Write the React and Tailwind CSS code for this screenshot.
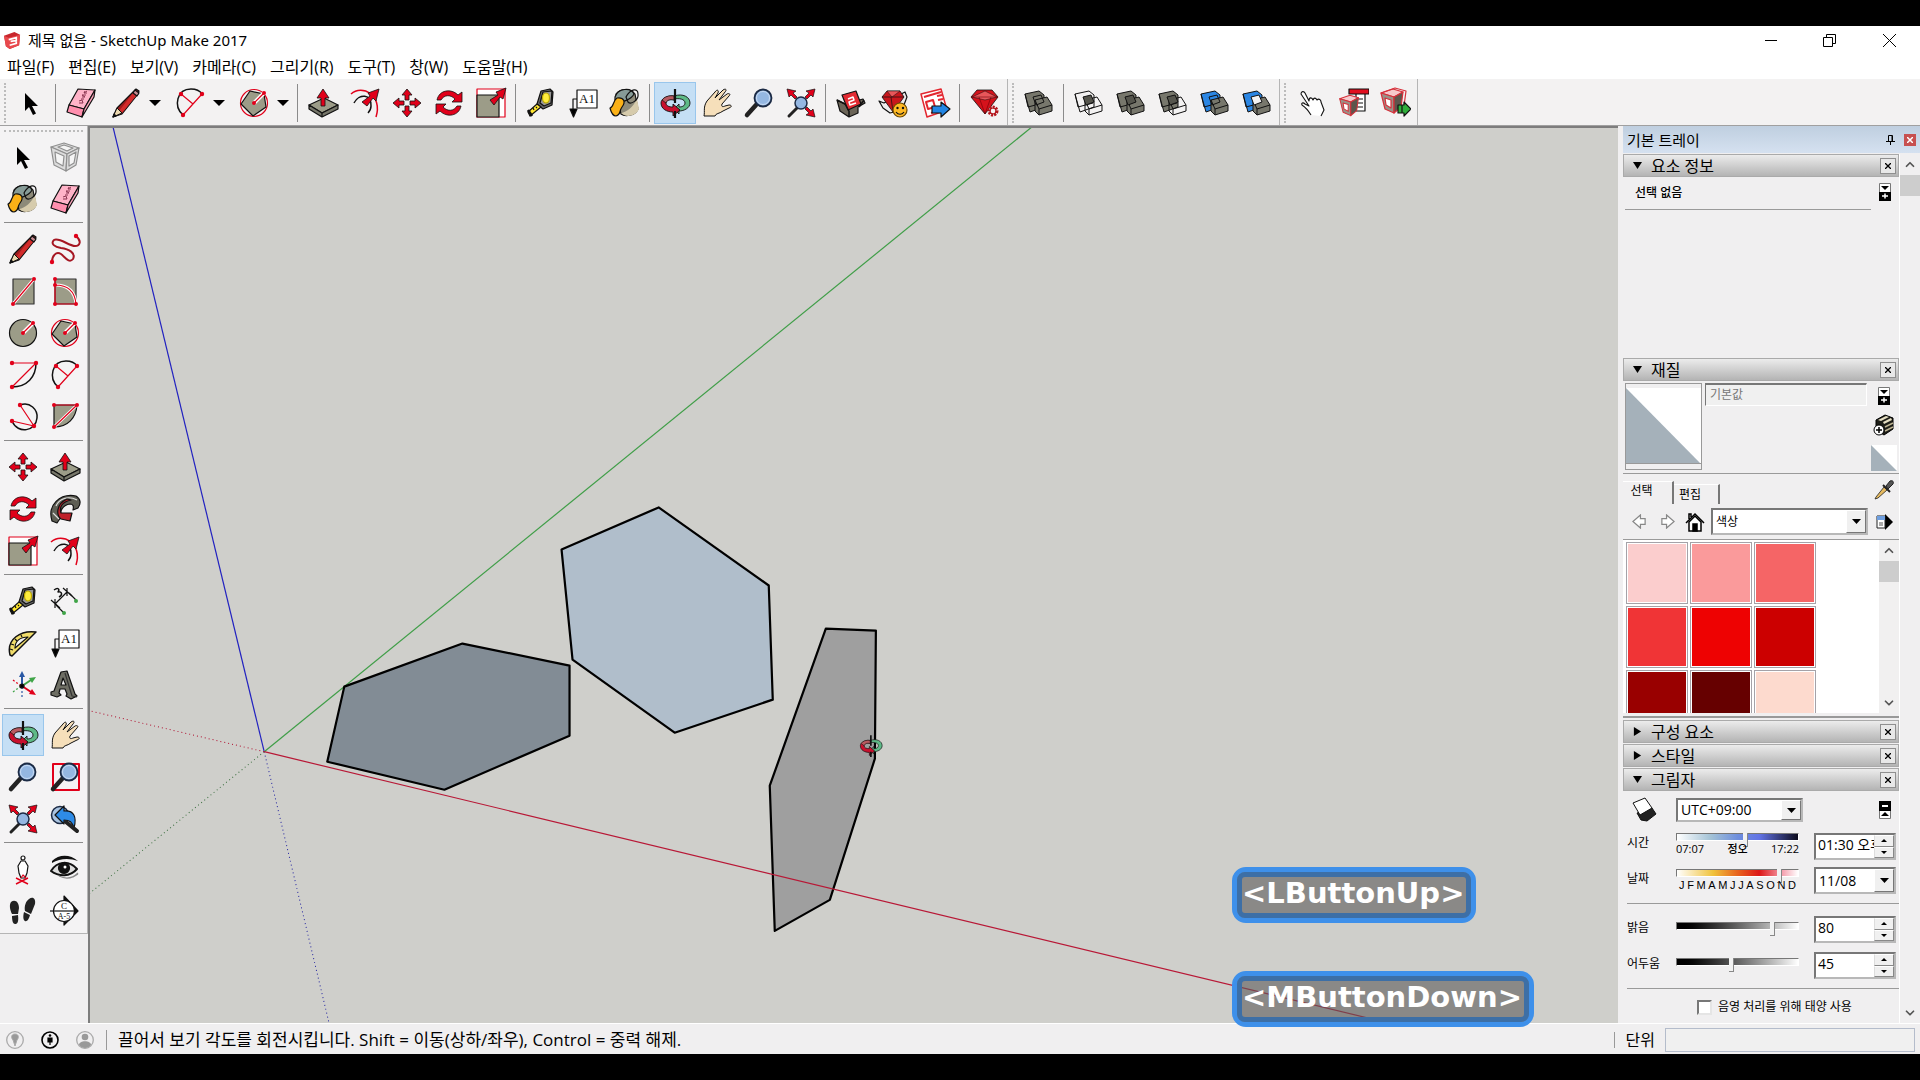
import React from 'react';
import { ChevronUp, ChevronDown } from 'lucide-react';

const RED = '#e1001a';
const STONE = '#9c9c88';

const Svg = ({ children, className = 'w-8 h-8' }) => (
  <svg viewBox="0 0 32 32" className={className} fill="none" stroke="#111" strokeWidth="1.2" strokeLinejoin="round" aria-hidden="true">
    {children}
  </svg>
);

const Dots = ({ points, r = 2 }) => (
  <g fill={RED} stroke="none">
    {points.map(([x, y]) => <circle key={`${x}-${y}`} cx={x} cy={y} r={r} />)}
  </g>
);

/* ---------- drawing tools ---------- */

const SelectIcon = () => (
  <Svg><path d="M10 6v18l4-4 4 8 3-1.5-4-7.5h6z" fill="#000" stroke="none" /></Svg>
);

const EraserIcon = () => (
  <Svg>
    <path d="M13 2 30 3 19 22 4 18z" fill="#ffb3c8" />
    <path d="M4 18 19 22 17 30 2 25z" fill="#ff8fae" />
    <path d="M30 3 29 10 17 30 19 22z" fill="#f9a3ba" />
    <path d="M14 16l4 0-1-3-3 1M16 12l3 0M17 10l3 0-3-2 4 0M19 6l3 0M20 4l-1 2 3-2" stroke="#8a3550" strokeWidth="1" />
  </Svg>
);

const PencilIcon = () => (
  <Svg>
    <path d="M24 4l2-2 3 2-1 3-16 20-9 3 4-9z" fill="#9e1c1c" />
    <path d="M23 6l3 3L12 26l-3-2z" fill="#d22b2b" stroke="none" />
    <path d="M7 21l5 5-9 4z" fill="#ecd9b0" strokeWidth="1" />
    <path d="M3 30l3-1-2-2z" fill="#111" />
    <path d="M25 3l4 3-2 3-4-3z" fill="#c98c93" />
  </Svg>
);

const FreehandIcon = () => (
  <Svg>
    <path d="M27 3C33 8 31 13 26 13 20 13 10 4 5 7 1 11 6 14 12 15 20 16 27 20 24 26 20 31 16 24 12 21 7 18 3 23 3 29" stroke="#a51622" strokeWidth="2" />
    <Dots points={[[27, 3], [3, 29]]} r={2.2} />
  </Svg>
);

const RectIcon = () => (
  <Svg>
    <rect x="6" y="4" width="21" height="25" fill={STONE} stroke="#333" />
    <path d="M6 29 27 4" stroke="#fff" strokeWidth="3" />
    <path d="M6 29 27 4" stroke={RED} />
    <Dots points={[[6, 29], [27, 4]]} />
  </Svg>
);

const RotatedRectIcon = () => (
  <Svg>
    <rect x="6" y="4" width="21" height="25" fill={STONE} stroke="#333" />
    <path d="M6 10c13 0 20 7 21 19" stroke="#fff" strokeWidth="3" />
    <path d="M6 4v25h21M6 10c13 0 20 7 21 19" stroke={RED} />
    <Dots points={[[6, 4], [6, 10], [6, 29], [27, 29]]} />
  </Svg>
);

const CircleIcon = () => (
  <Svg>
    <circle cx="16" cy="16" r="13.5" fill={STONE} />
    <path d="M16 16 26 6" stroke="#fff" strokeWidth="4" />
    <path d="M16 16 26 6" stroke={RED} />
    <Dots points={[[16, 16], [26, 6]]} />
  </Svg>
);

const PolygonIcon = () => (
  <Svg>
    <circle cx="16" cy="16" r="13.5" stroke={RED} />
    <path d="M12 4 26 7 28 20 15 29 3 17z" fill={STONE} />
    <path d="M16 16 26 6" stroke="#fff" strokeWidth="4" />
    <path d="M16 16 26 6" stroke={RED} />
    <Dots points={[[16, 16], [26, 6]]} />
  </Svg>
);

const ArcCenterIcon = () => (
  <Svg>
    <path d="M29 4c0 14-9 24-24 24" strokeWidth="1.5" />
    <path d="M5 4h24L5 28" stroke={RED} />
    <Dots points={[[5, 4], [29, 4], [5, 28]]} r={2.2} />
  </Svg>
);

const ArcIcon = () => (
  <Svg>
    <path d="M9 28C-1 19 3 2 17 2c6 0 9 2 11 5" strokeWidth="1.5" />
    <path d="M9 28 28 7M7 7l12 10" stroke={RED} />
    <Dots points={[[9, 28], [28, 7], [7, 7]]} r={2.2} />
  </Svg>
);

const Arc3Icon = () => (
  <Svg>
    <path d="M13 4c10-4 18 5 17 13-1 13-19 17-25 3" strokeWidth="1.5" />
    <path d="M13 4 27 25 5 20" stroke={RED} />
    <Dots points={[[13, 4], [27, 25], [5, 20]]} r={2.2} />
  </Svg>
);

const PieIcon = () => (
  <Svg>
    <path d="M5 4v22c14 0 22-9 23-22z" fill={STONE} />
    <path d="M5 26 28 4" stroke="#fff" strokeWidth="3" />
    <path d="M5 26 28 4H5" stroke={RED} />
    <Dots points={[[5, 4], [28, 4], [5, 26]]} />
  </Svg>
);

/* ---------- edit tools ---------- */

const PushPullIcon = () => (
  <Svg>
    <path d="M2 18 17 11 31 18 15 26z" fill={STONE} />
    <path d="M2 18v4l13 8 16-8v-4l-16 8z" fill="#77776a" />
    <path d="M15 26v4" />
    <path d="M14 19v-8h-4l6-9 6 9h-4v8z" fill={RED} strokeWidth=".8" />
  </Svg>
);

const OffsetIcon = () => (
  <Svg>
    <path d="M2 7C13-3 34 8 27 30" stroke={RED} strokeWidth="1.5" />
    <path d="M5 16c5-10 18-9 17 3 0 3-1 5-3 7" strokeWidth="1.5" />
    <path d="M13 15l8-6-2-3 11-4-3 12-3-3-6 8z" fill={RED} strokeWidth=".8" />
  </Svg>
);

const MoveIcon = () => (
  <Svg>
    <g fill={RED} strokeWidth=".8">
      <path d="M16 2l5 6h-3v5h-4V8h-3z" />
      <path d="M16 30l5-6h-3v-5h-4v5h-3z" />
      <path d="M2 16l6-5v3h5v4H8v3z" />
      <path d="M30 16l-6-5v3h-5v4h5v3z" />
    </g>
  </Svg>
);

const RotateIcon = () => (
  <Svg>
    <path d="M4 13C6 3 18 1 25 8l4-3v10H19l3-3C17 7 11 8 8 13z" fill={RED} strokeWidth=".8" />
    <path d="M28 19C26 29 14 31 7 24l-4 3V17h10l-3 3c5 5 11 4 14-1z" fill={RED} strokeWidth=".8" />
  </Svg>
);

const ScaleIcon = () => (
  <Svg>
    <path d="M2 2h28v28H2z" stroke={RED} fill="#fff" />
    <rect x="2" y="8" width="22" height="22" fill={STONE} />
    <path d="M15 13l8-5-2-3 10-4-3 11-3-2-6 8z" fill={RED} strokeWidth=".8" />
  </Svg>
);

const FollowMeIcon = () => (
  <Svg>
    <path d="M3 28C-2 12 11 0 27 3c5 3 5 8 2 12l-5 2c1-4 0-6-3-6-7 1-11 7-9 13l-4 6z" fill="#5e5e54" />
    <path d="M7 13C10 6 19 2 28 7M4 20l6 6" stroke="#ddd" />
    <path d="M22 7c-9 2-12 7-10 13h11l-2 8-9-2C7 22 7 11 18 6z" fill="#c0202a" />
  </Svg>
);

const TapeIcon = () => (
  <Svg>
    <path d="M12 17 16 4l9-2 3 3-1 13-9 4z" fill="#666" />
    <path d="M15 16 18 5l9-1-1 12-7 3z" fill="#999" />
    <ellipse cx="21" cy="11" rx="3.5" ry="5" fill="#ffed3d" stroke="#bda800" />
    <path d="M12 17l4 3-11 9-2-4z" fill="#ffe62e" />
    <path d="M3 23l4 6" strokeWidth="2.5" />
    <path d="M8 21l1 2M11 20l1 1" />
  </Svg>
);

const DimensionIcon = () => (
  <Svg>
    <path d="M6 19 18 7M2 15l9 8M14 3l9 8M6 14v9M18 3v8" />
    <path d="M7 20l7 7M20 8l7 7" />
    <path d="M5 5c4-3 6-1 4 2 4-1 5 3 1 5" strokeWidth="1.5" />
    <g fill="#3fa447" stroke="none"><circle cx="15" cy="28" r="2" /><circle cx="27" cy="16" r="2" /></g>
  </Svg>
);

const ProtractorIcon = () => (
  <Svg>
    <path d="M3 28C-1 12 14 3 29 5L5 29z" fill="#f1dd6b" strokeWidth="1.5" />
    <path d="M8 21c0-7 5-11 13-11z" fill="#f4f4f4" />
    <path d="M3 22l3 1M4 17l3 1M8 12l2 2M14 8l1 2" />
  </Svg>
);

const TextIcon = () => (
  <Svg>
    <rect x="10" y="3" width="20" height="18" fill="#fff" />
    <text x="20" y="16" textAnchor="middle" fontFamily="Liberation Serif" fontSize="13" fill="#111" stroke="none">A1</text>
    <path d="M10 12H6v11" />
    <path d="M3 22h7l-3.500 8z" fill="#000" />
  </Svg>
);

const AxesIcon = () => (
  <Svg>
    <path d="M15 17V6" stroke="#2b59a5" strokeWidth="2" />
    <path d="M12 8l3-6 3 6z" fill="#2b59a5" stroke="none" />
    <path d="M15 17l9-6" stroke="#3fa447" strokeWidth="2" />
    <path d="M22 9l7-1-4 6z" fill="#3fa447" stroke="none" />
    <path d="M15 17l9 6" stroke={RED} strokeWidth="2" />
    <path d="M25 20l4 6-7-1z" fill={RED} stroke="none" />
    <path d="M15 18v10" stroke="#2b59a5" strokeDasharray="2 2" />
    <path d="M14 17l-8 6" stroke="#3fa447" strokeDasharray="2 2" />
    <path d="M14 17l-8-6" stroke={RED} strokeDasharray="2 2" />
    <circle cx="15" cy="17" r="2" fill="#000" />
  </Svg>
);

const Text3DIcon = () => (
  <Svg>
    <path d="M12 3l6-1 8 23 2 2-6 3-5-3 1-2-2-5h-5l-1 4 2 2-4 2-6-2v-3l3-1z" fill="#6e6e64" />
    <path d="M12 16l2-7 3 7z" fill="#f4f4f4" />
    <path d="M16 4l7 23 5 1" stroke="#333" />
  </Svg>
);

const PaintIcon = () => (
  <Svg>
    <path d="M7 7c4-6 15-6 19 0l3 15c-3 7-13 8-17 5z" fill="#8d8a79" />
    <path d="M12 26c6-1 12-6 16-14l2 10c-3 7-11 8-15 6z" fill="#d6cbac" stroke="none" />
    <path d="M6 10c3-9 16-10 19-3-3 6-13 9-19 8z" fill="#869b97" />
    <path d="M17 10c5-9 12-9 12-3 1 6-7 11-10 8z" />
    <path d="M8 11c7-1 9 4 5 9-3 4-1 8-6 9-3 0-5-4-6-8 4-1 3-8 7-10z" fill="#fbb117" />
  </Svg>
);

const ComponentIcon = () => (
  <Svg>
    <g stroke="#8f8f8f" fill="#dcdcdc">
      <path d="M2 6 15 2l15 5-12 6z" />
      <path d="M2 6 18 13l-1 17L5 24z" />
      <path d="M18 13 30 7l-3 17-10 6z" />
      <path d="M6 11l9 4-1 10-7-4zM20 15l7-4-2 11-5 3zM9 6l6-2 9 3-6 3z" fill="#f5f5f5" />
    </g>
  </Svg>
);

/* ---------- camera tools ---------- */

const OrbitShape = () => (
  <>
    <path d="M15 9c9-3 16 1 16 7 0 5-6 8-11 8v3l-5-5 5-5v3c3 0 6-1 6-4 0-4-6-5-11-4z" fill="#5eba87" strokeWidth=".9" />
    <path d="M15 9C8 8 2 12 2 16c0 6 6 9 12 9v4l7-6-7-6v3c-4 0-7-1-7-4s4-4 8-3z" fill="#c8102e" strokeWidth=".9" />
    <path d="M3 13c2-3 7-5 12-4v4c-4-1-7 0-8 3z" fill="#b95a61" strokeWidth=".7" />
    <path d="M16 2v14M16 24v7" stroke="#111" strokeWidth="2.2" />
  </>
);

const OrbitIcon = () => <Svg><OrbitShape /></Svg>;

const PanIcon = () => (
  <Svg>
    <path d="M3 29c1-5-1-9 3-15l8-9c2-3 4-2 3 1l-3 5 8-8c3-2 4 0 2 2l-6 8 8-6c2-1 4 0 2 2l-7 8c-1 3 1 3 3 2l4-1c3 0 3 2 0 3l-6 3c-4 3-7 2-8 5z" fill="#f6dfba" strokeWidth="1" />
  </Svg>
);

const Glass = () => (
  <>
    <path d="M4 28 13 18" stroke="#222" strokeWidth="4.500" strokeLinecap="round" />
    <circle cx="20" cy="11" r="8.5" fill="#94b7e2" stroke="#1b2a44" strokeWidth="1.800" />
    <circle cx="20" cy="11" r="6.500" stroke="#c9dcf4" strokeWidth="1" />
  </>
);

const ZoomIcon = () => <Svg><Glass /></Svg>;

const ZoomWindowIcon = () => (
  <Svg>
    <rect x="4" y="3" width="26" height="26" stroke={RED} strokeWidth="2" />
    <Glass />
  </Svg>
);

const ZoomExtentsIcon = () => (
  <Svg>
    <path d="M4 29l8-8" stroke="#222" strokeWidth="3" strokeLinecap="round" />
    <circle cx="16" cy="16" r="6" fill="#94b7e2" stroke="#1b2a44" strokeWidth="1.5" />
    <g fill={RED} strokeWidth=".7">
      <path d="M2 2l9 2-3 2 4 4-2 2-4-4-2 2z" />
      <path d="M30 2l-9 2 3 2-4 4 2 2 4-4 2 2z" />
      <path d="M30 30l-9-2 3-2-4-4 2-2 4 4 2-2z" />
    </g>
  </Svg>
);

const PreviousIcon = () => (
  <Svg>
    <circle cx="11" cy="12" r="8.5" fill="#a9c3e0" stroke="#1b2a44" strokeWidth="1.5" />
    <path d="M6 12l9-9v5c10-1 13 6 10 17-2-6-4-8-10-8v4z" fill="#2e8be6" />
    <path d="M17 19 28 28" stroke="#222" strokeWidth="4" strokeLinecap="round" />
  </Svg>
);

const PositionCameraIcon = () => (
  <Svg>
    <path d="M9 25l12 6M21 25 9 31" stroke={RED} strokeWidth="1.5" />
    <circle cx="16" cy="5" r="2" fill="#fff" />
    <path d="M14 8h4l3 5-1 7-2 5h-4l-2-5-1-7z" fill="#fff" />
    <path d="M14 25l2-3 3 3" stroke={RED} />
  </Svg>
);

const LookIcon = () => (
  <Svg>
    <path d="M3 8C10 1 21 1 29 8 21 5 11 5 3 10z" fill="#111" stroke="none" />
    <path d="M2 18c6-10 18-11 26-2-7 8-18 8-26 2z" fill="#ddd" strokeWidth="2" />
    <circle cx="15" cy="15" r="5.5" fill="#111" />
    <circle cx="16" cy="14" r="1.5" fill="#fff" stroke="none" />
    <path d="M10 23c8 4 14 2 19-3M24 24l5-3" stroke="#888" />
  </Svg>
);

const WalkIcon = () => (
  <Svg>
    <g fill="#222" stroke="none">
      <path d="M4 7c4-3 8 0 8 6l-1 6H5C3 15 2 10 4 7zM5 21l6-1c1 8-1 9-3 9s-3-3-3-8z" />
      <path d="M22 4c4-3 7 0 6 5l-4 10-6-3c-1-5 1-10 4-12zM17 17l6 3c-1 4-3 7-5 6s-2-5-1-9z" />
    </g>
  </Svg>
);

const SectionIcon = () => (
  <Svg>
    <path d="M15 5V1l14 15-14 14v-4z" fill="#111" />
    <circle cx="15" cy="16" r="10.5" fill="#fff" />
    <path d="M1 16h28" />
    <text x="15" y="14" textAnchor="middle" fontFamily="Liberation Serif" fontSize="9" fill="#111" stroke="none">C</text>
    <text x="15" y="24" textAnchor="middle" fontFamily="Liberation Serif" fontSize="8" fill="#111" stroke="none">A-5</text>
  </Svg>
);

/* ---------- warehouse ---------- */

const WarehouseIcon = () => (
  <Svg>
    <path d="M2 13l8 4 18-5 2 4-7 4v6l-9 4-9-6z" fill="#6b6558" />
    <path d="M7 8 21 4l5 13-13 6z" fill="#e32b33" />
    <path d="M13 12l5-2 1 3-5 2 1 3 6-2" stroke="#fff" strokeWidth="1.5" />
    <path d="M2 13l8 4 4 7M29 13l-5 7M14 24v6" strokeWidth="1.5" />
  </Svg>
);

const ExtensionWarehouseIcon = () => (
  <Svg>
    <path d="M2 14l5 2 21-11 2 5-5 13-12 3-7-5z" fill="#eee" />
    <path d="M5 10l5-6h13l4 6-11 15z" fill="#c9161c" strokeWidth=".8" />
    <path d="M10 4l5 6 8-6z" fill="#e8565a" strokeWidth=".5" />
    <path d="M5 10h22M14 10l2 15" strokeWidth=".7" />
    <circle cx="23" cy="23" r="7" fill="#ffba24" stroke="#6d4a00" />
    <circle cx="20.500" cy="21" r="1.200" fill="#111" stroke="none" />
    <circle cx="26" cy="21" r="1.200" fill="#111" stroke="none" />
    <path d="M19 25c2 3 6 3 8 0" />
  </Svg>
);

const LayoutIcon = () => (
  <Svg>
    <path d="M2 7 22 2l6 21-20 7z" fill="#fff" stroke="#e3262f" strokeWidth="1.5" />
    <path d="M5 10l17-5M7 15l7-2 2 7-7 2zM18 9l5-1M19 13l5-1M12 26l8-2" stroke="#e3262f" strokeWidth="2" />
    <path d="M13 19h9v-4l9 7-9 8v-4h-9z" fill="#2286e4" />
  </Svg>
);

const RubyIcon = () => (
  <Svg>
    <path d="M2 10l6-7h15l6 7-13 17z" fill="#d5121b" strokeWidth=".8" />
    <path d="M3 10l13-6 12 6-12 3z" fill="#e8565a" strokeWidth=".5" />
    <path d="M2 10h27M10 10l6 17 6-17" strokeWidth=".6" stroke="#6d0007" />
    <circle cx="24" cy="24" r="4" fill="#f4f4f4" stroke="#b3141b" strokeWidth="3" strokeDasharray="2 1" />
    <circle cx="24" cy="24" r="3" stroke="#b3141b" />
  </Svg>
);

/* ---------- solid tools ---------- */

const SOLID = '#77776c';
const BLUE = '#2b86e3';

const Solids = ({ back = SOLID, front = SOLID, overlap = 'none' }) => (
  <Svg>
    <g strokeWidth="1">
      <path d="M2 7 16 4l5 4v12L7 25z" fill={back} />
      <path d="M5 20l15-4M2 7l3 13" />
      <path d="M12 13l12-3 5 8v6l-13 4-4-4z" fill={front} />
      <path d="M12 13l4 9 13-4M16 22v6" />
      <path d="M10 10l8-2 3 7-8 3z" fill={overlap} />
    </g>
  </Svg>
);

const HandIcon = () => (
  <Svg>
    <path d="M16 28c-3-5-6-8-9-10-1-2 1-3 3-1l4 2L6 7c0-3 3-3 4-1l4 8c0-4 3-4 4-1 1-3 3-2 4 0 2-2 4 0 4 2l3 8-3 6" fill="#fff" strokeWidth="1.100" />
  </Svg>
);

const RedBox = () => (
  <g stroke="#d6303a">
    <path d="M2 9 14 5l10 3-9 5z" fill="#f6c9cc" />
    <path d="M2 9l13 4 0 16-9-4z" fill="#9b9187" />
    <path d="M15 13l9-5-2 15-7 6z" fill="#5d554c" />
    <path d="M6 14l6 2v8l-5-3z" fill="#fff" />
  </g>
);

const DynamicMenuIcon = () => (
  <Svg>
    <rect x="19" y="6" width="9" height="18" fill="#fff" />
    <path d="M20 12h6M20 16h6M20 20h6" />
    <rect x="12" y="2" width="20" height="5" fill="#e10f1f" />
    <g transform="translate(1 4) scale(.85)"><RedBox /></g>
  </Svg>
);

const DynamicOptionsIcon = () => (
  <Svg>
    <g transform="translate(0 -3)"><RedBox /></g>
    <path d="M2 6 16 1l11 3-2 15" stroke="#d6303a" />
    <path d="M19 18h6v-3l7 7-7 7v-3h-6z" fill="#2fae3b" />
    <path d="M23 18v8" />
  </Svg>
);

/* ---------- shared bits ---------- */

const ToolButton = ({ label, active, menu, children }) => (
  <button
    aria-label={label}
    className={`w-[42px] h-[42px] shrink-0 flex items-center justify-center ${menu ? 'pl-[5px]' : ''} ${active ? 'bg-[#c5dff5] border border-[#99c6ec]' : ''}`}
  >
    {children}
  </button>
);

const Caret = ({ label }) => (
  <button aria-label={label} className="w-[22px] h-[42px] shrink-0 flex items-center justify-center">
    <svg viewBox="0 0 12 6" className="w-3 h-1.5" aria-hidden="true"><path d="M0 0h12L6 6z" /></svg>
  </button>
);

const Divider = () => <div className="w-px h-[38px] bg-[#8b8b8b] ml-[3px] mr-1 shrink-0"></div>;
const Grip = () => <div className="h-10 border-l-2 border-dotted border-[#bcbcbc] ml-1 mr-1 shrink-0"></div>;
const ToolGroup = ({ children }) => (
  <div className="h-[46px] pt-px flex items-center border-r border-[#b5b5b5] pr-px">{children}</div>
);

const mainTools = [
  ['선택', SelectIcon], '|',
  ['지우개', EraserIcon], ['선', PencilIcon, true], ['호', ArcIcon, true], ['다각형', PolygonIcon, true], '|',
  ['밀기/끌기', PushPullIcon], ['오프셋', OffsetIcon], ['이동', MoveIcon], ['회전', RotateIcon], ['배율', ScaleIcon], '|',
  ['줄자', TapeIcon], ['텍스트', TextIcon], ['페인트 통', PaintIcon], '|',
  ['궤도', OrbitIcon], ['이동 보기', PanIcon], ['확대/축소', ZoomIcon], ['범위 확대/축소', ZoomExtentsIcon], '|',
  ['3D Warehouse', WarehouseIcon], ['Extension Warehouse', ExtensionWarehouseIcon], ['LayOut', LayoutIcon], '|',
  ['확장 관리자', RubyIcon],
];

const sideTools = [
  [['선택', SelectIcon], ['구성 요소', ComponentIcon], ['페인트 통', PaintIcon], ['지우개', EraserIcon]],
  [
    ['선', PencilIcon], ['자유형', FreehandIcon], ['직사각형', RectIcon], ['회전된 직사각형', RotatedRectIcon],
    ['원', CircleIcon], ['다각형', PolygonIcon], ['호', ArcCenterIcon], ['2점 호', ArcIcon], ['3점 호', Arc3Icon], ['파이', PieIcon],
  ],
  [
    ['이동', MoveIcon], ['밀기/끌기', PushPullIcon], ['회전', RotateIcon], ['따라가기', FollowMeIcon],
    ['배율', ScaleIcon], ['오프셋', OffsetIcon],
  ],
  [
    ['줄자', TapeIcon], ['치수', DimensionIcon], ['각도기', ProtractorIcon], ['텍스트', TextIcon],
    ['축', AxesIcon], ['3D 텍스트', Text3DIcon],
  ],
  [
    ['궤도', OrbitIcon], ['이동 보기', PanIcon], ['확대/축소', ZoomIcon], ['창 확대/축소', ZoomWindowIcon],
    ['범위 확대/축소', ZoomExtentsIcon], ['이전', PreviousIcon],
  ],
  [['카메라 배치', PositionCameraIcon], ['둘러보기', LookIcon], ['걷기', WalkIcon], ['단면', SectionIcon]],
];

const TitleBar = () => (
  <header className="h-7 flex items-center bg-white pl-1">
    <svg viewBox="0 0 18 20" className="w-[17px] h-[19px]" aria-hidden="true">
      <path d="M0 5 11 1l6 3-1 11-10 4-4-3z" fill="#c8262c" />
      <path d="M0 5l5 2 12-3-1 11-10 4-4-3z" fill="#e8484c" />
      <path d="M5 9l8-2v3l-6 1M6 15l7-2v-3" stroke="#fff" strokeWidth="1.800" fill="none" />
    </svg>
    <h1 className="ml-[7px] text-[15px] leading-5 font-['Noto_Sans','Noto_Sans_CJK_KR',sans-serif]">제목 없음 - SketchUp Make 2017</h1>
    <div className="ml-auto flex">
      <button aria-label="최소화" className="w-[58px] h-7 flex items-center justify-center">
        <svg viewBox="0 0 12 12" className="w-3 h-3" stroke="#000" aria-hidden="true"><path d="M0 6.500h12" /></svg>
      </button>
      <button aria-label="이전 크기로 복원" className="w-[58px] h-7 flex items-center justify-center">
        <svg viewBox="0 0 13 13" className="w-[13px] h-[13px]" stroke="#000" fill="none" aria-hidden="true">
          <path d="M.5 3.500h9v9h-9zM3.500 3V.500h9v9H10" />
        </svg>
      </button>
      <button aria-label="닫기" className="w-[62px] h-7 flex items-center justify-center">
        <svg viewBox="0 0 13 13" className="w-[13px] h-[13px]" stroke="#000" aria-hidden="true"><path d="M0 0l13 13M13 0 0 13" /></svg>
      </button>
    </div>
  </header>
);

const menus = ['파일(F)', '편집(E)', '보기(V)', '카메라(C)', '그리기(R)', '도구(T)', '창(W)', '도움말(H)'];

const MenuBar = () => (
  <nav className="h-[25px] flex items-center gap-[14px] bg-white pl-[7px] text-[16px] leading-5">
    {menus.map((m) => <button key={m}>{m}</button>)}
  </nav>
);

const Toolbar = () => (
  <div className="h-[47px] flex items-start bg-[#f3f2f2] border-b border-[#a0a0a0] shrink-0">
    <ToolGroup>
      <Grip />
      {mainTools.map((tool, i) => {
        if (tool === '|') return <Divider key={i} />;
        const [label, Icon, menu] = tool;
        return (
          <React.Fragment key={i}>
            <ToolButton label={label} active={label === '궤도'} menu={menu}><Icon /></ToolButton>
            {menu && <Caret label={`${label} 메뉴`} />}
          </React.Fragment>
        );
      })}
    </ToolGroup>
    <ToolGroup>
      <Grip />
      <ToolButton label="외부 셸"><Solids /></ToolButton>
      <Divider />
      <ToolButton label="교차"><Solids back="none" front="none" overlap="#55554d" /></ToolButton>
      <ToolButton label="통합"><Solids overlap="#55554d" /></ToolButton>
      <ToolButton label="빼기"><Solids front="none" overlap="#55554d" /></ToolButton>
      <ToolButton label="자르기"><Solids back={BLUE} /></ToolButton>
      <ToolButton label="분할"><Solids back={BLUE} overlap="#f3f2f2" /></ToolButton>
    </ToolGroup>
    <ToolGroup>
      <Grip />
      <ToolButton label="상호 작용"><HandIcon /></ToolButton>
      <ToolButton label="구성 요소 옵션"><DynamicMenuIcon /></ToolButton>
      <ToolButton label="구성 요소 속성"><DynamicOptionsIcon /></ToolButton>
    </ToolGroup>
  </div>
);

const SideTools = () => (
  <aside className="w-[88px] shrink-0 bg-[#f0eff0]">
    <div className="bg-[#f4f3f4] border-b border-r border-[#b5b5b5] pt-1 pb-px">
      <div className="mx-1 h-[6px] border-t-2 border-dotted border-[#bcbcbc]"></div>
      {sideTools.map((group, i) => (
        <div key={i}>
          {i > 0 && <div className="h-px bg-[#8b8b8b] mx-1 mt-[2px] mb-[5px]"></div>}
          <div className="grid grid-cols-[42px_42px] pl-[2px]">
            {group.map(([label, Icon]) => (
              <ToolButton key={label} label={label} active={label === '궤도'}><Icon /></ToolButton>
            ))}
          </div>
        </div>
      ))}
    </div>
  </aside>
);

const KeyBadge = ({ children }) => (
  <div className="h-14 w-fit rounded-[14px] border-[5px] border-[#3e90ea] bg-[#5c5a5a]/60">
    <div className="h-full rounded-lg border-[5px] border-[#3d6fa6] pr-[2px] pb-1 flex items-center text-white font-bold text-[29px] leading-9 font-['DejaVu_Sans',sans-serif]">
      {children}
    </div>
  </div>
);

const Viewport = () => (
  <main className="relative flex-1 min-w-0 border-l-2 border-t-2 border-[#7d7d7d] bg-[#cfcfcb]">
    <svg viewBox="91 129 1528 894" preserveAspectRatio="xMinYMin slice" className="absolute inset-0 w-full h-full" fill="none" role="img" aria-label="모델 보기">
      <path d="M265 752 114 128" stroke="#2222c0" strokeWidth="1.200" />
      <path d="M265 752 330 1024" stroke="#2222a0" strokeDasharray="1 3" />
      <path d="M265 752 1033 127" stroke="#3f9e47" strokeWidth="1.200" />
      <path d="M265 752 90 894" stroke="#3a6e3e" strokeDasharray="1 3" />
      <path d="M265 752 90 711" stroke="#b01030" strokeDasharray="1 3" />
      <g stroke="#000" strokeWidth="2.200" strokeLinejoin="round">
        <path d="M345 687 463 644 570 666 570 736 445 790 328 762z" fill="#828c95" />
        <path d="M562 550 659 508 769 586 773 700 675 733 573 660z" fill="#b0becb" />
        <path d="M826 629 876 631 875 759 830 900 775 931 770 786z" fill="#9f9f9f" />
      </g>
      <path d="M265 752 1384 1022" stroke="#b81836" strokeWidth="1.200" />
      <g transform="translate(859 734) scale(.75)" stroke="#111"><OrbitShape /></g>
    </svg>
    <div className="absolute z-10 left-[1142px] -bottom-[4px] flex flex-col gap-12">
      <KeyBadge>&lt;LButtonUp&gt;</KeyBadge>
      <KeyBadge>&lt;MButtonDown&gt;</KeyBadge>
    </div>
  </main>
);

/* ---------- tray ---------- */

const SectionHeader = ({ title, open }) => (
  <div className="h-[23px] flex items-center bg-linear-to-b from-[#ececec] to-[#b4b4b4] border border-[#aaa] pl-[9px] pr-[2px]">
    <svg viewBox="0 0 10 10" className="w-[9px] h-[9px]" aria-hidden="true">
      <path d={open ? 'M0 1h10L5 9z' : 'M1 0v10l8-5z'} />
    </svg>
    <h2 className="ml-[9px] text-[16px] leading-5">{title}</h2>
    <button aria-label={`${title} 닫기`} className="ml-auto w-4 h-4 border border-[#8f8f8f] bg-[#e8e8e8] flex items-center justify-center">
      <svg viewBox="0 0 6 6" className="w-1.5 h-1.5" stroke="#000" strokeWidth="1.300" aria-hidden="true"><path d="M0 0l6 6M6 0 0 6" /></svg>
    </button>
  </div>
);

const DetailToggle = ({ flip }) => (
  <button aria-label="세부 정보" className="w-3 h-[18px]">
    <svg viewBox="0 0 12 18" className="w-3 h-[18px]" aria-hidden="true">
      <path d="M.5.500h11v17H.5z" fill="#fff" stroke="#777" />
      {flip ? (
        <>
          <path d="M0 0h12v10H0z" />
          <path d="M3 4h6v2H3z" fill="#fff" />
          <path d="M6 11l4 4H2z" />
        </>
      ) : (
        <>
          <path d="M2 3h8L6 7z" />
          <path d="M0 9h12v9H0z" />
          <path d="M3 13h6M6 10.500v5" stroke="#fff" strokeWidth="1.5" />
        </>
      )}
    </svg>
  </button>
);

const field = 'bg-white border-2 border-t-[#777] border-l-[#777] border-b-[#b8b8b8] border-r-[#b8b8b8]';

const SelectBox = ({ label, value, className }) => (
  <div className={`relative ${field} ${className}`}>
    <select aria-label={label} defaultValue={value} className="appearance-none w-full h-full bg-transparent pl-[3px] outline-none">
      <option>{value}</option>
    </select>
    <span className="absolute right-0 top-0 h-full w-5 bg-[#f0f0f0] border border-t-white border-l-white border-b-[#777] border-r-[#777] flex items-center justify-center pointer-events-none">
      <svg viewBox="0 0 9 5" className="w-[9px] h-[5px]" aria-hidden="true"><path d="M0 0h9L4.500 5z" /></svg>
    </span>
  </div>
);

const Spinner = ({ label, value }) => (
  <div className={`w-[82px] h-[27px] flex ${field}`}>
    <input aria-label={label} defaultValue={value} className="w-0 flex-1 min-w-0 pl-[2px] pb-1 text-[14px] leading-4 bg-transparent outline-none" />
    <div className="w-5 flex flex-col">
      {['M0 3h6L3 0z', 'M0 0h6L3 3z'].map((d, i) => (
        <button key={d} aria-label={i ? '감소' : '증가'} className="flex-1 min-h-0 bg-[#f0f0f0] border border-t-white border-l-[#ddd] border-b-[#888] border-r-[#888] flex items-center justify-center">
          <svg viewBox="0 0 6 3" className="w-1.5 h-[3px]" aria-hidden="true"><path d={d} /></svg>
        </button>
      ))}
    </div>
  </div>
);

const Slider = ({ id, value, gradient }) => (
  <input
    id={id}
    type="range"
    defaultValue={value}
    className={`block appearance-none w-full h-2 border border-t-[#777] border-l-[#777] border-b-white border-r-white ${gradient} [&::-webkit-slider-thumb]:appearance-none [&::-webkit-slider-thumb]:w-[5px] [&::-webkit-slider-thumb]:h-[14px] [&::-webkit-slider-thumb]:mt-[5px] [&::-webkit-slider-thumb]:bg-[#f2f2f2] [&::-webkit-slider-thumb]:border-r [&::-webkit-slider-thumb]:border-b [&::-webkit-slider-thumb]:border-[#888]`}
  />
);

const EntityInfo = () => (
  <section className="h-[204px]">
    <SectionHeader title="요소 정보" open />
    <div className="flex items-start justify-between pl-3 pr-2 pt-1.5">
      <p className="text-[12px] leading-5 font-medium">선택 없음</p>
      <DetailToggle />
    </div>
    <div className="h-px bg-[#9a9a9a] ml-[2px] mr-7 mt-[6px]"></div>
  </section>
);

const swatches = [
  ['#fccdcd', 'bg-[#fbcdcd]'], ['#fb9a9b', 'bg-[#fa9a9b]'], ['#f56566', 'bg-[#f56566]'],
  ['#f03436', 'bg-[#f03436]'], ['#ee0202', 'bg-[#ee0202]'], ['#cc0000', 'bg-[#cc0000]'],
  ['#990000', 'bg-[#990000]'], ['#660000', 'bg-[#660000]'], ['#fddace', 'bg-[#fddace]'],
];

const Materials = () => (
  <section>
    <SectionHeader title="재질" open />
    <div className="h-[93px] flex pl-[2px] pt-[2px] border-b border-[#9a9a9a]">
      <div className="w-[77px] h-[87px] border border-[#999] pt-1 pb-[5px]">
        <svg viewBox="0 0 75 75" className="w-[75px] h-[76px]" preserveAspectRatio="none" aria-hidden="true">
          <path d="M0 0h75v75H0z" fill="#fff" />
          <path d="M0 0v75h75z" fill="#a5b1ba" />
          <path d="M0 75h75" stroke="#999" strokeWidth="2" />
        </svg>
      </div>
      <input aria-label="재질 이름" defaultValue="기본값" className="border border-t-2 border-t-[#777] border-l-[#777] border-b-white border-r-white ml-[3px] w-[162px] h-[23px] pl-1 pb-[2px] text-[12px] text-[#777] bg-[#f0f0f0] outline-none" />
      <div className="ml-auto w-[27px] flex flex-col items-center pt-1 gap-2 mr-[2px]">
        <DetailToggle />
        <button aria-label="재질 만들기">
          <svg viewBox="0 0 22 24" className="block w-[22px] h-6" stroke="#000" aria-hidden="true">
            <path d="M3 7 12 2l8 3v11l-9 6-8-5z" fill="#1d1d17" />
            <path d="M5 7l8-4 3 1-8 4zM10 9l8-4 1 2-8 4z" fill="#e6dfc3" stroke="none" />
            <path d="M12 14l8-4M12 18l8-4" stroke="#bbb292" strokeWidth="1.5" />
            <circle cx="6" cy="17" r="5" fill="#fff" />
            <path d="M3 17h6M6 14v6" strokeWidth="1.5" />
          </svg>
        </button>
        <button aria-label="기본 재질로 설정">
          <svg viewBox="0 0 26 26" className="block w-[26px] h-[26px]" aria-hidden="true">
            <path d="M0 0h26v26H0z" fill="#fff" />
            <path d="M0 0v26h26z" fill="#a5b1ba" />
          </svg>
        </button>
      </div>
    </div>
    <div className="h-[30px] flex items-end text-[12px] leading-4" role="tablist">
      <button role="tab" aria-selected="true" className="w-[51px] h-[23px] pr-3 pb-1 border-t border-t-white border-r-2 border-r-[#777]">선택</button>
      <button role="tab" aria-selected="false" className="w-[46px] h-[20px] pr-3 border-t border-t-white border-r-2 border-r-[#777]">편집</button>
      <button aria-label="스포이트" className="ml-auto mr-[5px] mb-1">
        <svg viewBox="0 0 20 20" className="w-5 h-5" stroke="#222" aria-hidden="true">
          <path d="M10 7 2 17l-1 2 3-1 9-8z" fill="#e5b95e" strokeWidth=".8" />
          <path d="M9 5l7 7" strokeWidth="2" />
          <path d="M12 6l4-5c3-1 4 1 3 3l-5 5z" fill="#555" />
        </svg>
      </button>
    </div>
    <div className="h-[36px] flex items-center border-b border-[#9a9a9a]">
      {['M9 5V1L1 8l8 7v-4h5V5z', 'M7 5V1l8 7-8 7v-4H2V5z'].map((d, i) => (
        <button key={d} aria-label={i ? '앞으로' : '뒤로'} className="ml-[9px] mr-1">
          <svg viewBox="0 0 16 16" className="w-[15px] h-[15px]" fill="#fff" stroke="#888" strokeWidth="1.300" aria-hidden="true"><path d={d} /></svg>
        </button>
      ))}
      <button aria-label="모델 안" className="ml-1.5">
        <svg viewBox="0 0 20 20" className="w-5 h-5" stroke="#000" strokeWidth="1.5" aria-hidden="true">
          <path d="M4 10v9h12v-9l-6-6z" fill="#fff" />
          <path d="M1 11l9-9 9 9M4 7V2h2v3" fill="none" />
          <path d="M8 12h4v7H8z" />
        </svg>
      </button>
      <SelectBox label="재질 모음" value="색상" className="ml-1.5 w-[157px] h-[27px] text-[12px]" />
      <button aria-label="자세히" className="ml-auto mr-[6px]">
        <svg viewBox="0 0 17 18" className="w-[17px] h-[18px]" aria-hidden="true">
          <path d="M9 1l8 8-8 8z" />
          <path d="M1 3h8v12H1z" fill="#fff" stroke="#222" />
          <path d="M1 3h8v4H1z" fill="#6f9fe0" />
          <path d="M3 10h4M3 12h4" stroke="#555" />
        </svg>
      </button>
    </div>
    <div className="h-[173px] flex bg-white overflow-hidden">
      <div className="grid grid-cols-3 gap-[2px] pl-[3px] pt-[2px] content-start">
        {swatches.map(([name, color]) => (
          <button key={name} aria-label={name} className={`w-[62px] h-[62px] border border-[#a5a2a8] outline-1 -outline-offset-2 outline-white ${color}`}></button>
        ))}
      </div>
      <div className="ml-auto w-5 bg-[#f1f0f0] flex flex-col items-center">
        <ChevronUp className="h-[21px] w-[14px] text-[#555]" strokeWidth={3} />
        <div className="w-full h-[21px] bg-[#cdcdcd]"></div>
        <ChevronDown className="mt-auto h-5 w-[14px] text-[#555]" strokeWidth={3} />
      </div>
    </div>
    <div className="mt-[3px] h-[2px] bg-[#999] mb-[2px]"></div>
  </section>
);

const Shadows = () => (
  <section className="text-[12px] leading-4">
    <SectionHeader title="그림자" open />
    <div className="h-[38px] flex items-center pl-[9px] pr-2">
      <button aria-label="그림자 표시">
        <svg viewBox="0 0 26 26" className="w-[26px] h-[26px]" stroke="#111" aria-hidden="true">
          <path d="M5 16l4 7 6 1 9-7-4-6z" fill="#222" />
          <path d="M1 6 13 1l7 10-12 7z" fill="#fff" />
        </svg>
      </button>
      <SelectBox label="시간대" value="UTC+09:00" className="ml-[18px] w-[127px] h-[24px] text-[14px]" />
      <div className="ml-auto flex"><DetailToggle flip /></div>
    </div>
    <div className="grid grid-cols-[46px_123px_94px] gap-x-[3px] pl-1">
      <label htmlFor="time" className="pt-1.5 h-9">시간</label>
      <div className="pt-1 h-9">
        <Slider id="time" value={57} gradient="bg-[linear-gradient(to_right,#fff,#a3c2d6_28%,#6f8fdd_50%,#6273e6_68%,#0c0a1c)]" />
        <div className="flex justify-between text-[11px] leading-3 mt-[2px] font-medium"><span>07:07</span><span>정오</span><span>17:22</span></div>
      </div>
      <div className="ml-3 pt-1"><Spinner label="시간 값" value="01:30 오후" /></div>

      <label htmlFor="date" className="pt-1.5 h-9">날짜</label>
      <div className="pt-1 h-9">
        <Slider id="date" value={86} gradient="bg-[linear-gradient(to_right,#fff,#f0c23a_30%,#e8641e_50%,#dd1717_68%,#f6a6b4_88%,#fff)]" />
        <div className="flex justify-between px-[3px] text-[11px] leading-3 mt-[2px] font-['Liberation_Sans',sans-serif]">
          {'JFMAMJJASOND'.split('').map((m, i) => <span key={i}>{m}</span>)}
        </div>
      </div>
      <div className="ml-3 pt-[2px]"><SelectBox label="날짜 값" value="11/08" className="w-[82px] h-[27px] text-[14px]" /></div>
    </div>
    <div className="h-px bg-[#9a9a9a] ml-1 mt-[2px] mb-3"></div>
    <div className="grid grid-cols-[46px_123px_94px] gap-x-[3px] pl-1">
      {[['light', '밝음', 80], ['dark', '어두움', 45]].map(([id, label, value]) => (
        <React.Fragment key={id}>
          <label htmlFor={id} className="pt-1 h-9">{label}</label>
          <div className="pt-1.5"><Slider id={id} value={value} gradient="bg-linear-to-r from-black to-white" /></div>
          <div className="ml-3"><Spinner label={`${label} 값`} value={value} /></div>
        </React.Fragment>
      ))}
    </div>
    <div className="h-px bg-[#9a9a9a] ml-1"></div>
    <label className="flex items-center gap-1.5 pt-[10px] pl-[74px]">
      <input type="checkbox" className="appearance-none w-[15px] h-[15px] bg-white border-2 border-t-[#777] border-l-[#777] border-b-[#e5e5e5] border-r-[#e5e5e5]" />
      음영 처리를 위해 태양 사용
    </label>
  </section>
);

const Tray = () => (
  <aside className="w-[297px] ml-[5px] shrink-0 flex flex-col">
    <div className="h-[27px] shrink-0 flex items-center bg-linear-to-b from-[#bfcfe0] to-[#d5e1f0] pl-1 pr-1">
      <h2 className="text-[15px] leading-5">기본 트레이</h2>
      <button aria-label="자동 숨김" className="ml-auto">
        <svg viewBox="0 0 9 10" className="w-[9px] h-[10px]" stroke="#000" fill="none" aria-hidden="true"><path d="M2.500 6V.500h4V6M6 1v5M0 6.500h9M4.500 6v4" /></svg>
      </button>
      <button aria-label="트레이 닫기" className="ml-[9px] w-3 h-3 bg-[#c75050] flex items-center justify-center">
        <svg viewBox="0 0 6 6" className="w-1.5 h-1.5" stroke="#fff" strokeWidth="1.5" aria-hidden="true"><path d="M0 0l6 6M6 0 0 6" /></svg>
      </button>
    </div>
    <div className="flex-1 min-h-0 flex pt-px">
      <div className="flex-1 min-w-0 border-r border-white">
        <EntityInfo />
        <Materials />
        <div className="flex flex-col gap-px pb-px">
          <SectionHeader title="구성 요소" />
          <SectionHeader title="스타일" />
        </div>
        <Shadows />
      </div>
      <div className="w-5 shrink-0 flex flex-col items-center">
        <ChevronUp className="h-[21px] w-[14px] text-[#555]" strokeWidth={3} />
        <div className="w-full h-[21px] bg-[#cdcdcd]"></div>
        <ChevronDown className="mt-auto h-5 w-[14px] text-[#555]" strokeWidth={3} />
      </div>
    </div>
  </aside>
);

const StatusBar = () => (
  <footer className="h-[31px] shrink-0 flex items-center border-t border-white bg-[#f0eff0] pl-[6px] pr-[5px] pt-px leading-5">
    <div className="flex gap-[17px]">
      <svg viewBox="0 0 18 18" className="w-[18px] h-[18px]" fill="none" stroke="#aaa" aria-hidden="true">
        <circle cx="9" cy="9" r="8.300" strokeWidth="1.300" />
        <path d="M9 3c4 0 4 4 2 6L9 15 7 9C5 7 5 3 9 3z" fill="#999" />
      </svg>
      <svg viewBox="0 0 18 18" className="w-[18px] h-[18px]" fill="none" stroke="#000" aria-hidden="true">
        <circle cx="9" cy="9" r="8" strokeWidth="1.600" />
        <circle cx="9" cy="4.500" r="1.300" fill="#000" stroke="none" />
        <path d="M7 7h4v4H7zM9 8v6" strokeWidth="1.200" fill="#000" />
      </svg>
      <svg viewBox="0 0 18 18" className="w-[18px] h-[18px]" fill="none" stroke="#aaa" aria-hidden="true">
        <circle cx="9" cy="9" r="8.300" strokeWidth="1.300" />
        <circle cx="9" cy="6" r="3.300" fill="#999" stroke="none" />
        <path d="M3 14c0-5 12-5 12 0-3 4-9 4-12 0z" fill="#999" stroke="none" />
      </svg>
    </div>
    <div className="w-px h-5 bg-[#999] ml-3 mr-[11px]"></div>
    <p className="text-[17px]">끌어서 보기 각도를 회전시킵니다. Shift = 이동(상하/좌우), Control = 중력 해제.</p>
    <div className="w-px h-4 bg-[#999] ml-auto mr-[11px]"></div>
    <label htmlFor="measure" className="text-[16px]">단위</label>
    <input id="measure" className="ml-[10px] w-[250px] h-6 bg-[#f0f0f0] border border-[#b4bccb] outline-none" />
  </footer>
);

const App = () => (
  <div className="h-screen flex flex-col bg-black py-[26px] text-black font-['Open_Sans','Noto_Sans_CJK_KR',sans-serif] overflow-hidden">
    <TitleBar />
    <MenuBar />
    <Toolbar />
    <div className="flex-1 min-h-0 flex bg-[#f0eff0]">
      <SideTools />
      <Viewport />
      <Tray />
    </div>
    <StatusBar />
  </div>
);

export default App;
